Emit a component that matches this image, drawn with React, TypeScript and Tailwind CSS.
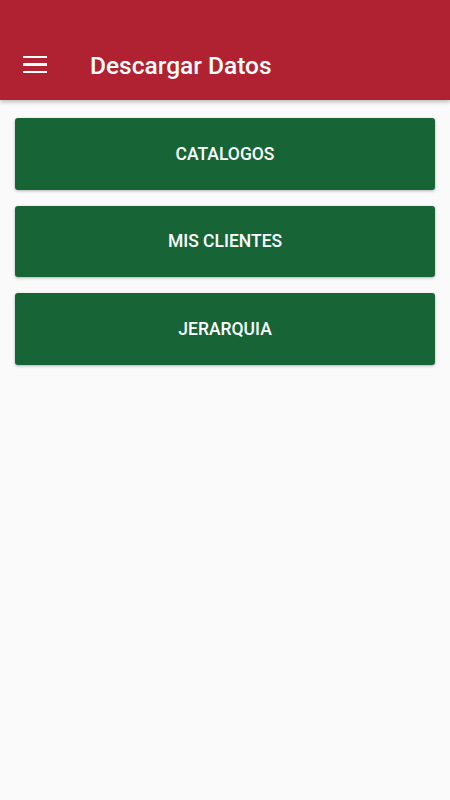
export default function App() {
  const items = ["CATALOGOS", "MIS CLIENTES", "JERARQUIA"];
  return (
    <div className="w-[450px] h-[800px] bg-[#fafafa] flex flex-col" style={{ fontFamily: "Roboto, 'Noto Sans', sans-serif" }}>
      <div className="h-[100px] bg-[#b02131] flex items-end pb-[18px] shadow-[0_2px_4px_rgba(0,0,0,0.25)] relative z-10">
        <div className="w-[90px] pl-[23px] flex flex-col gap-[5px] pb-[9px]">
          <span className="block w-[24px] h-[2.5px] bg-white"></span>
          <span className="block w-[24px] h-[2.5px] bg-white"></span>
          <span className="block w-[24px] h-[2.5px] bg-white"></span>
        </div>
        <div className="text-white text-[24.5px] font-medium leading-[32px]">Descargar Datos</div>
      </div>
      <div className="flex flex-col gap-[16px] px-[15px] pt-[18px]">
        {items.map((t) => (
          <div
            key={t}
            className="h-[71.5px] bg-[#176536] rounded-[3px] flex items-center justify-center text-white text-[17.5px] font-medium shadow-[0_1px_3px_rgba(0,0,0,0.3)]"
          >
            {t}
          </div>
        ))}
      </div>
    </div>
  );
}
